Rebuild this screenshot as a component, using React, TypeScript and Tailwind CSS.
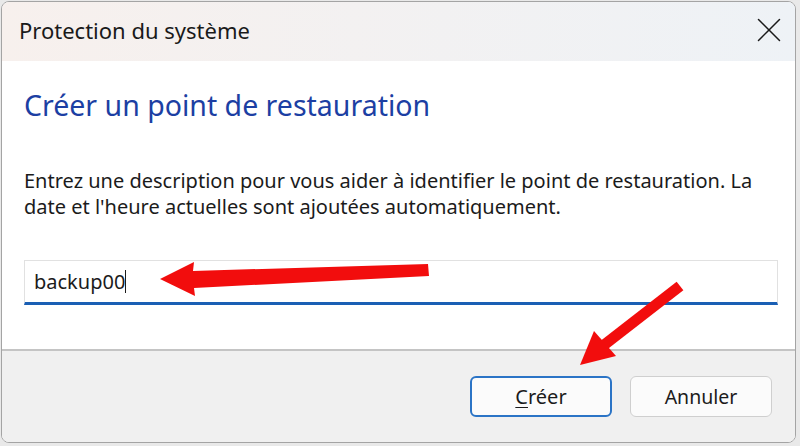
import { X } from "lucide-react";

// Windows 11 "Protection du système" dialog, create restore point step.

const FONT = "font-['Noto_Sans','Open_Sans',sans-serif]";

function Arrows() {
  return (
    <svg
      className="absolute inset-0 pointer-events-none"
      width={800}
      height={446}
      viewBox="0 0 800 446"
    >
      {/* arrow pointing at the text field */}
      <polygon
        points="160,279 194,262 193,271 428,264 429,276 194,288 195,296"
        fill="#f20d0d"
      />
      {/* arrow pointing at the Créer button */}
      <line x1={680} y1={286} x2={604} y2={345} stroke="#f20d0d" strokeWidth={11} />
      <polygon points="580,365 594,331 616,356" fill="#f20d0d" />
    </svg>
  );
}

export default function App() {
  return (
    <div className={`relative w-[800px] h-[446px] overflow-hidden bg-[#e9e9e9] ${FONT}`}>
      <div className="ml-[1px] mt-[1px] w-[795px] h-[442px] flex flex-col rounded-[8px] border border-[#a4a4a4] overflow-hidden bg-white">
        {/* title bar */}
        <div className="h-[59px] shrink-0 flex items-start justify-between pl-[17px] pr-[5px] bg-gradient-to-r from-[#f7f0ed] to-[#eef2f6]">
          <span className="mt-[17px] text-[22px] text-[#1a1a1a] leading-none">
            Protection du système
          </span>
          <X className="mt-[7px] w-[42px] h-[42px] text-[#1a1a1a]" strokeWidth={0.85} />
        </div>

        {/* body */}
        <div className="flex-1 flex flex-col pl-[22px] pr-[17px] pt-[25px]">
          <h1 className="text-[28.5px] leading-[38px] text-[#1c3fa3]">
            Créer un point de restauration
          </h1>
          <p className="mt-[44px] text-[20px] leading-[26px] text-[#1b1b1b]">
            Entrez une description pour vous aider à identifier le point de
            restauration. La date et l'heure actuelles sont ajoutées
            automatiquement.
          </p>
          <div className="mt-[40px] h-[45px] flex items-center border border-[#e1e1e1] border-b-[3px] border-b-[#1a5fb4] pl-[9px]">
            <span className="text-[20px] text-[#1b1b1b]">backup00</span>
            <span className="w-[1px] h-[23px] bg-[#1b1b1b]" />
          </div>
        </div>

        {/* footer */}
        <div className="h-[93px] shrink-0 flex items-center justify-end gap-[18px] pr-[23px] border-t-2 border-[#c4c4c4] bg-[#f0f0f0]">
          <button className="w-[142px] h-[41px] rounded-[6px] border-2 border-[#2b74c6] bg-[#fbfbfb] text-[20px] text-[#1b1b1b]">
            <span className="underline underline-offset-[3px] decoration-1">C</span>réer
          </button>
          <button className="w-[142px] h-[41px] rounded-[6px] border border-[#cfcfcf] bg-[#fbfbfb] text-[19.5px] text-[#1b1b1b]">
            Annuler
          </button>
        </div>
      </div>
      <Arrows />
    </div>
  );
}
